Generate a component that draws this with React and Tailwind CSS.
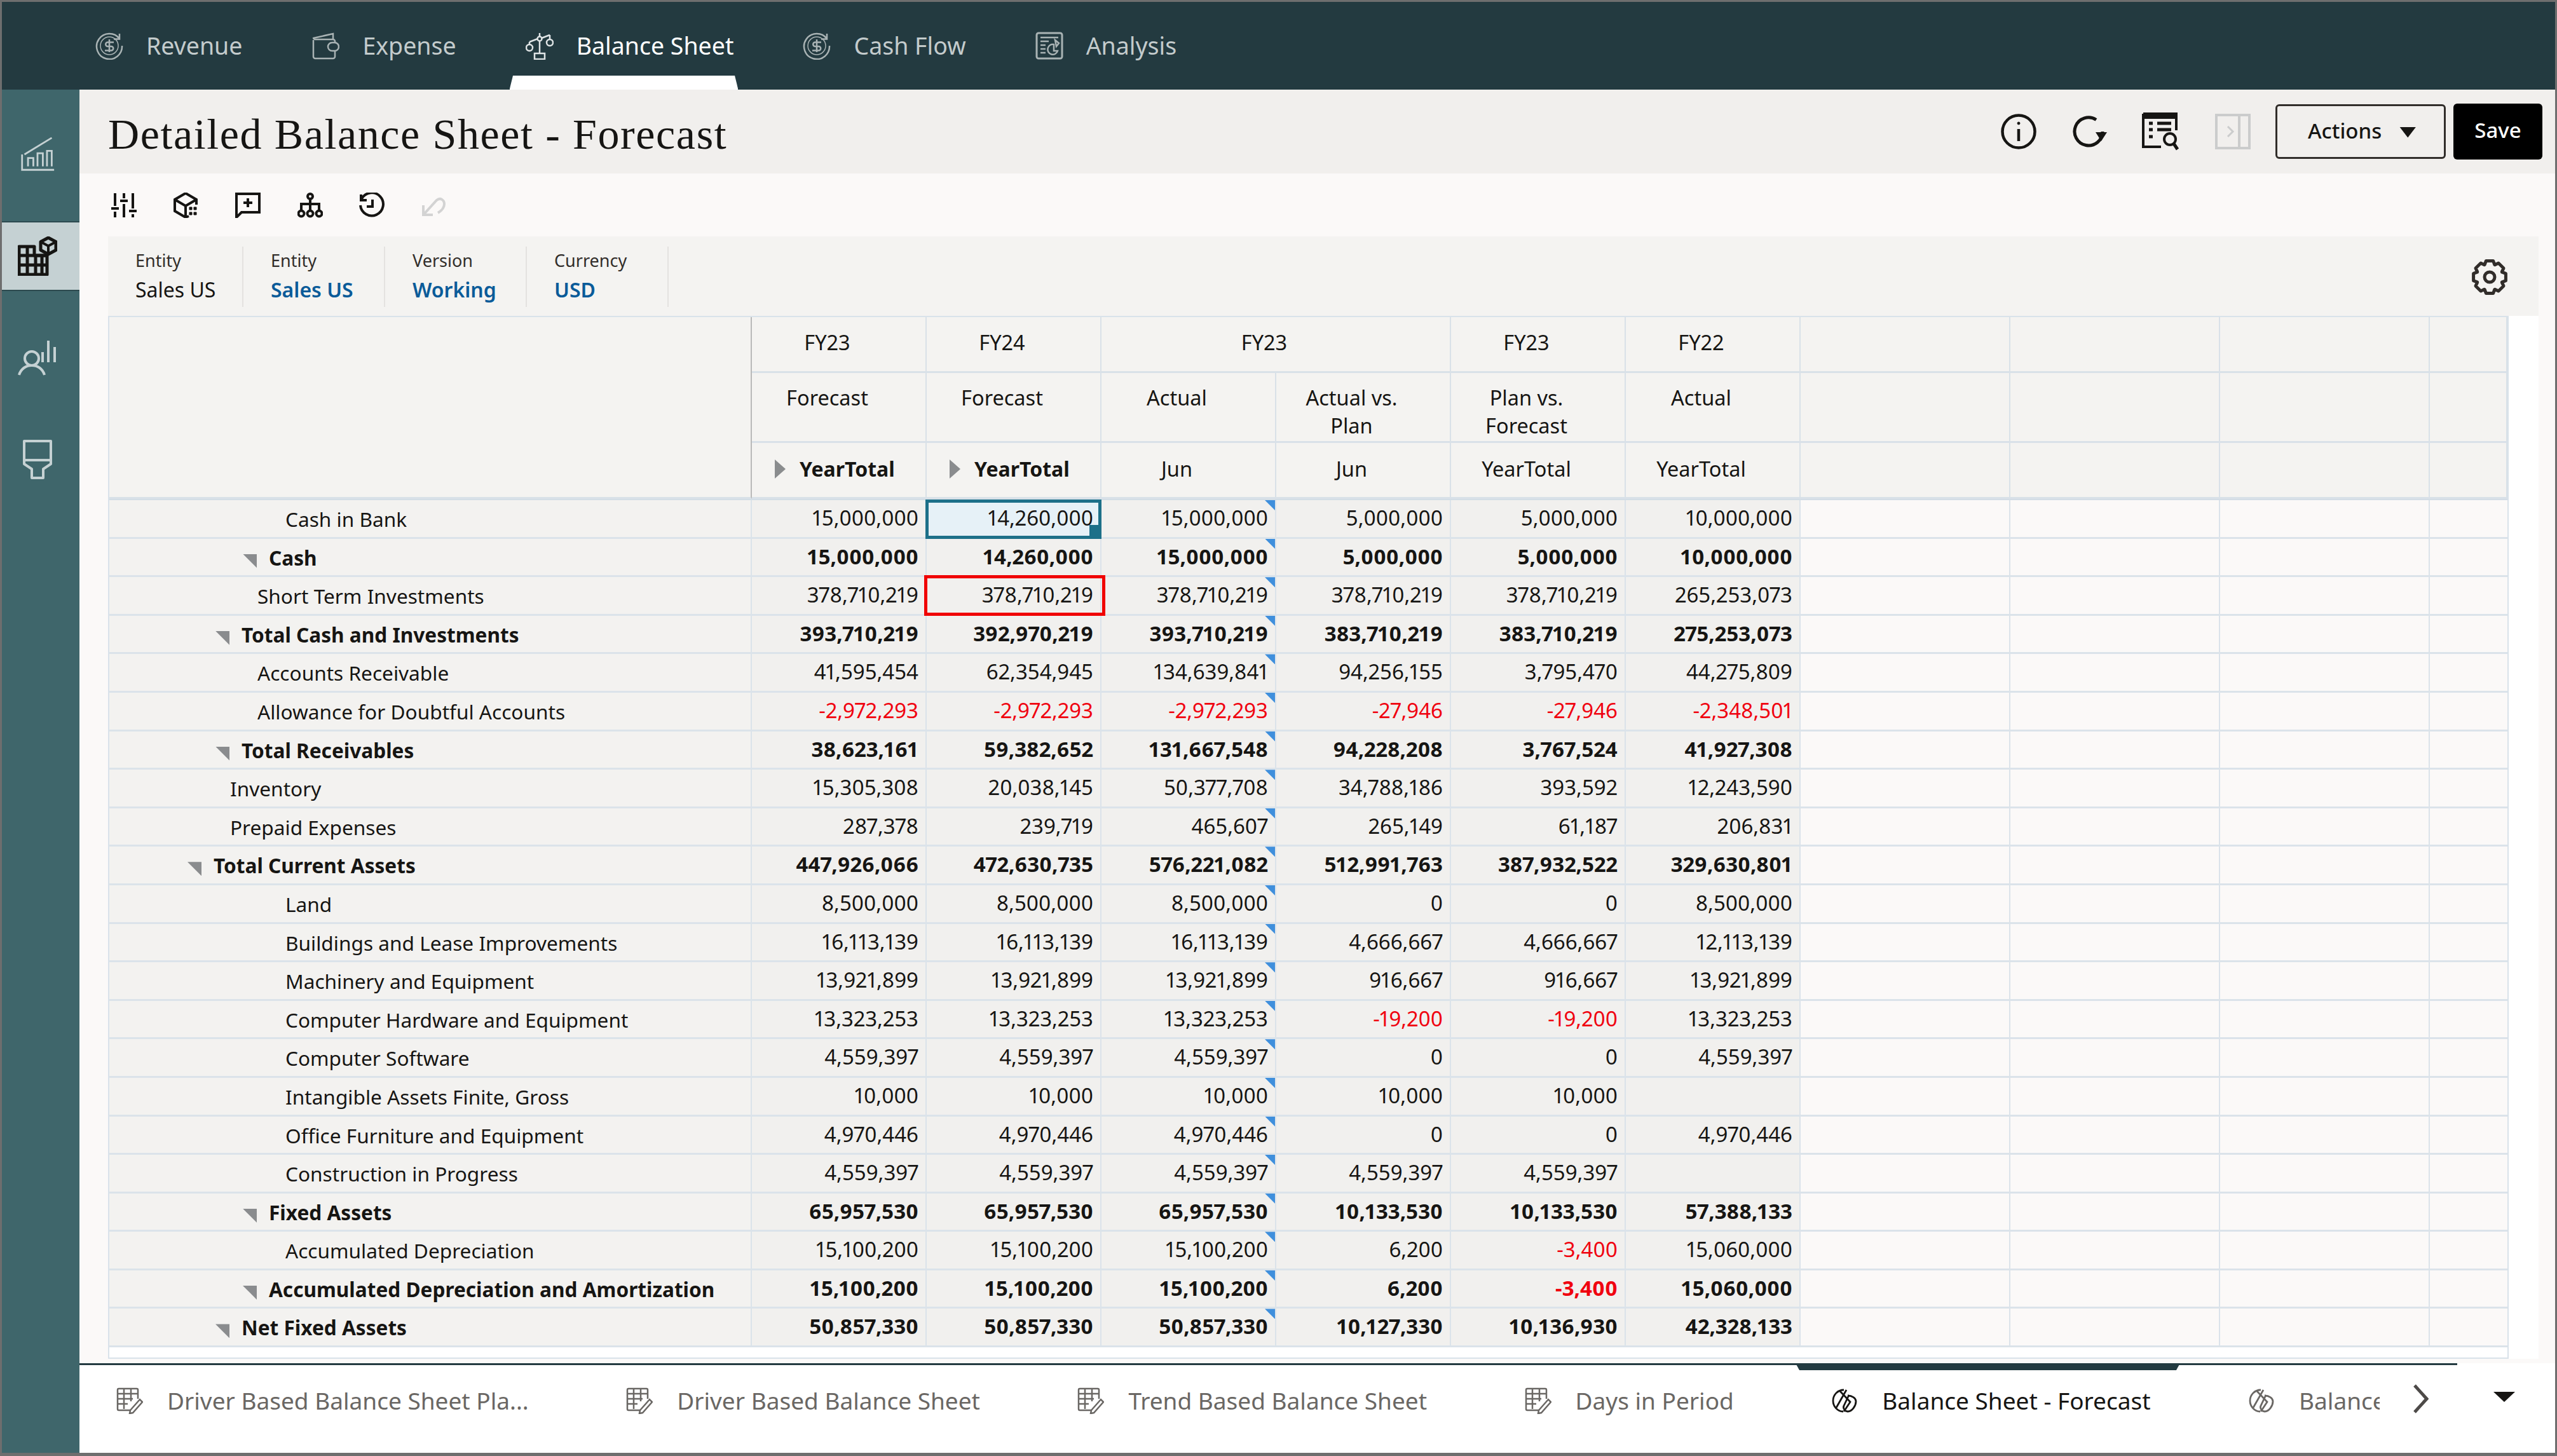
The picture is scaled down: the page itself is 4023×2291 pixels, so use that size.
import React from 'react'

const gridCols = 'grid grid-cols-[1011px_repeat(6,275px)_repeat(3,330px)_122px]'

const rows = [
    { label: 'Cash in Bank', pad: 'pl-[277px]', vals: ['15,000,000', '14,260,000', '15,000,000', '5,000,000', '5,000,000', '10,000,000'] },
    { label: 'Cash', pad: 'pl-[251px]', bold: true, tri: 'ml-[210px]', vals: ['15,000,000', '14,260,000', '15,000,000', '5,000,000', '5,000,000', '10,000,000'] },
    { label: 'Short Term Investments', pad: 'pl-[233px]', vals: ['378,710,219', '378,710,219', '378,710,219', '378,710,219', '378,710,219', '265,253,073'] },
    { label: 'Total Cash and Investments', pad: 'pl-[208px]', bold: true, tri: 'ml-[167px]', vals: ['393,710,219', '392,970,219', '393,710,219', '383,710,219', '383,710,219', '275,253,073'] },
    { label: 'Accounts Receivable', pad: 'pl-[233px]', vals: ['41,595,454', '62,354,945', '134,639,841', '94,256,155', '3,795,470', '44,275,809'] },
    { label: 'Allowance for Doubtful Accounts', pad: 'pl-[233px]', vals: ['-2,972,293', '-2,972,293', '-2,972,293', '-27,946', '-27,946', '-2,348,501'] },
    { label: 'Total Receivables', pad: 'pl-[208px]', bold: true, tri: 'ml-[167px]', vals: ['38,623,161', '59,382,652', '131,667,548', '94,228,208', '3,767,524', '41,927,308'] },
    { label: 'Inventory', pad: 'pl-[190px]', vals: ['15,305,308', '20,038,145', '50,377,708', '34,788,186', '393,592', '12,243,590'] },
    { label: 'Prepaid Expenses', pad: 'pl-[190px]', vals: ['287,378', '239,719', '465,607', '265,149', '61,187', '206,831'] },
    { label: 'Total Current Assets', pad: 'pl-[164px]', bold: true, tri: 'ml-[123px]', vals: ['447,926,066', '472,630,735', '576,221,082', '512,991,763', '387,932,522', '329,630,801'] },
    { label: 'Land', pad: 'pl-[277px]', vals: ['8,500,000', '8,500,000', '8,500,000', '0', '0', '8,500,000'] },
    { label: 'Buildings and Lease Improvements', pad: 'pl-[277px]', vals: ['16,113,139', '16,113,139', '16,113,139', '4,666,667', '4,666,667', '12,113,139'] },
    { label: 'Machinery and Equipment', pad: 'pl-[277px]', vals: ['13,921,899', '13,921,899', '13,921,899', '916,667', '916,667', '13,921,899'] },
    { label: 'Computer Hardware and Equipment', pad: 'pl-[277px]', vals: ['13,323,253', '13,323,253', '13,323,253', '-19,200', '-19,200', '13,323,253'] },
    { label: 'Computer Software', pad: 'pl-[277px]', vals: ['4,559,397', '4,559,397', '4,559,397', '0', '0', '4,559,397'] },
    { label: 'Intangible Assets Finite, Gross', pad: 'pl-[277px]', vals: ['10,000', '10,000', '10,000', '10,000', '10,000', ''] },
    { label: 'Office Furniture and Equipment', pad: 'pl-[277px]', vals: ['4,970,446', '4,970,446', '4,970,446', '0', '0', '4,970,446'] },
    { label: 'Construction in Progress', pad: 'pl-[277px]', vals: ['4,559,397', '4,559,397', '4,559,397', '4,559,397', '4,559,397', ''] },
    { label: 'Fixed Assets', pad: 'pl-[251px]', bold: true, tri: 'ml-[210px]', vals: ['65,957,530', '65,957,530', '65,957,530', '10,133,530', '10,133,530', '57,388,133'] },
    { label: 'Accumulated Depreciation', pad: 'pl-[277px]', vals: ['15,100,200', '15,100,200', '15,100,200', '6,200', '-3,400', '15,060,000'] },
    { label: 'Accumulated Depreciation and Amortization', pad: 'pl-[251px]', bold: true, tri: 'ml-[210px]', vals: ['15,100,200', '15,100,200', '15,100,200', '6,200', '-3,400', '15,060,000'] },
    { label: 'Net Fixed Assets', pad: 'pl-[208px]', bold: true, tri: 'ml-[167px]', vals: ['50,857,330', '50,857,330', '50,857,330', '10,127,330', '10,136,930', '42,328,133'] },
]

const Svg = ({ size = 44, vb = 44, sw = 2.5, className = '', children }) => (
    <svg width={size} height={size} viewBox={`0 0 ${vb} ${vb}`} fill="none" stroke="currentColor" strokeWidth={sw} className={className}>
        {children}
    </svg>
)

const DollarCycle = () => (
    <Svg>
        <path d="M38 11A20 20 0 1 0 42 22" />
        <path d="M38 3v8.500h-9" />
        <path d="M29 16.500H19.500a3.200 3.200 0 0 0 0 6.500h5.500a3.200 3.200 0 0 1 0 6.500H15" />
        <path d="M22 12v20" />
        <circle cx="22" cy="22" r="14" strokeWidth="1.500" />
    </Svg>
)

const Wallet = () => (
    <Svg>
        <path d="M3 13v26a3 3 0 0 0 3 3h28a3 3 0 0 0 3-3v-9" />
        <path d="M37 18v-3a3 3 0 0 0-3-3H6a3 3 0 0 1-3-3" />
        <path d="M3 10 34 3v9" />
        <rect x="26" y="17" width="17" height="13" rx="6.500" />
    </Svg>
)

const Scale = () => (
    <Svg>
        <circle cx="22" cy="11" r="3.500" />
        <path d="M22 2v5M22 15v20M6 16l13-5M25 10l13-5" />
        <circle cx="6" cy="25" r="5" />
        <circle cx="38" cy="17" r="5" />
        <path d="M6 16v4M38 5v7" />
        <rect x="14" y="34" width="16" height="9" />
    </Svg>
)

const AnalysisIcon = () => (
    <Svg>
        <rect x="2" y="2" width="40" height="40" rx="3" strokeWidth="3" />
        <path d="M8 9h28M8 15h13M8 21h8M8 27h8M8 33h8" />
        <path d="M29 20a8 8 0 1 0 6 10h-6z" />
        <path d="M31 13l6 5-4 5z" />
    </Svg>
)

const topTabs = [
    { name: 'Revenue', Icon: DollarCycle },
    { name: 'Expense', Icon: Wallet },
    { name: 'Balance Sheet', Icon: Scale, active: true },
    { name: 'Cash Flow', Icon: DollarCycle },
    { name: 'Analysis', Icon: AnalysisIcon },
]

const TableEdit = () => (
    <svg width="42" height="42" viewBox="0 0 42 42" fill="none" stroke="currentColor" strokeWidth="2.500">
        <path d="M22 36H4a2 2 0 0 1-2-2V4a2 2 0 0 1 2-2h28a2 2 0 0 1 2 2v14" />
        <path d="M2 10h32M2 18h24M2 26h16M12 2v32M23 2v20" />
        <path d="M22 36l-1 5 5-1 15-17-4-4z" fill="#fff" />
    </svg>
)

const Lattice = () => (
    <svg width="42" height="42" viewBox="0 0 42 42" fill="none" stroke="currentColor" strokeWidth="2.800">
        <path d="M20 4C10 4 3 12 3 21c0 9 7 17 16 17" />
        <path d="M24 4 8 32M14 6l16 17-10 15" />
        <path d="M26 13c7 0 13 4 13 9 0 7-6 16-13 16-4 0-8-5-6-9l8-17" />
    </svg>
)

const bottomTabs = [
    { name: 'Driver Based Balance Sheet Pla...', Icon: TableEdit },
    { name: 'Driver Based Balance Sheet', Icon: TableEdit },
    { name: 'Trend Based Balance Sheet', Icon: TableEdit },
    { name: 'Days in Period', Icon: TableEdit },
    { name: 'Balance Sheet - Forecast', Icon: Lattice, active: true },
]

const SideChart = () => (
    <Svg size={56} vb={60} sw={3}>
        <path d="M4 30v26h54" />
        <path d="M8 30 54 2" />
        <path d="M14 50V36h9v14M30 50V28h9v22M46 50V24h8v26" />
    </Svg>
)

const SideGrid = () => (
    <svg width="62" height="62" viewBox="0 0 62 62" fill="none" stroke="#161513" strokeWidth="5">
        <path d="M2 16h24v14h20v30H2z" strokeLinejoin="round" />
        <path d="M15 16v44M28 30v30M2 30h44M2 45h44M38 30v30" />
        <path d="M48 2l12 6.500v13L48 28l-12-6.500v-13z" fill="#c5d1d3" strokeLinejoin="round" />
        <path d="M36 8.500l12 6.500 12-6.500M48 15v13" strokeWidth="4" />
    </svg>
)

const SidePerson = () => (
    <svg width="62" height="58" viewBox="0 0 62 58" fill="none" stroke="currentColor" strokeWidth="4">
        <circle cx="22" cy="30" r="11" />
        <path d="M2 56c3-10 11-15 20-15s17 5 20 15" />
        <path d="M39 36V20M48 36V2M58 36V12" />
    </svg>
)

const SidePin = () => (
    <svg width="46" height="62" viewBox="0 0 46 62" fill="none" stroke="currentColor" strokeWidth="4">
        <path d="M2 2h42v36L32 46v14H14V46L2 38z" strokeLinejoin="round" />
        <path d="M2 32h42" />
    </svg>
)

const ToolSliders = () => (
    <Svg size={40} vb={40} sw={4}>
        <path d="M6 1v20M6 30v9M20 1v8M20 18v21M34 1v24M34 34v5" />
        <path d="M0 25h12M14 13h12M28 29h12" />
    </Svg>
)

const ToolCube = () => (
    <Svg size={40} vb={40} sw={4}>
        <path d="M24 37l-5 2L2 29V11L19 1l17 10v8" />
        <path d="M2 11l17 10 17-10M19 21v18" />
        <path d="M25 23h4v4h-4zM32 23h4v4h-4zM25 31h4v4h-4zM32 31h4v4h-4z" fill="currentColor" strokeWidth="1" />
    </Svg>
)

const ToolComment = () => (
    <Svg size={40} vb={40} sw={4}>
        <path d="M2 39V2h36v29H10z" />
        <path d="M13 16h14M20 9v14" />
    </Svg>
)

const ToolTree = () => (
    <Svg size={40} vb={40} sw={4}>
        <circle cx="20" cy="6" r="4" />
        <circle cx="6" cy="33" r="4.500" />
        <circle cx="20" cy="33" r="4.500" />
        <circle cx="34" cy="33" r="4.500" />
        <path d="M20 10v19M6 28V18h28v10" />
    </Svg>
)

const ToolHistory = () => (
    <Svg size={40} vb={40} sw={4}>
        <path d="M4 10A18 18 0 1 1 2 20" />
        <path d="M3 3v9h9" />
        <path d="M21 11v11h-9" />
    </Svg>
)

const ToolUndo = () => (
    <Svg size={40} vb={40} sw={4}>
        <path d="M4 34 24 12c6-5 12 0 12 6 0 6-5 11-10 14" />
        <path d="M3 20v15h15" />
    </Svg>
)

const InfoIcon = () => (
    <Svg size={56} vb={56} sw={4.5}>
        <circle cx="28" cy="28" r="25.500" />
        <path d="M28 24v19" />
        <circle cx="28" cy="15" r="2" fill="currentColor" strokeWidth="1" />
    </Svg>
)

const RefreshIcon = () => (
    <Svg size={56} vb={56} sw={5}>
        <path d="M49 28A22 22 0 1 1 39 9.500" />
        <path d="M38 29h18L47 43z" fill="currentColor" stroke="none" />
    </Svg>
)

const ReportIcon = () => (
    <Svg size={60} vb={60} sw={4}>
        <path d="M2 2h52v26M2 2v52h28" />
        <path d="M2 7h52" strokeWidth="6" />
        <path d="M11 17h6M24 17h22M11 27h6M24 27h22M11 38h6" strokeWidth="5" />
        <circle cx="44" cy="42" r="9" />
        <path d="M50 49l6 9" strokeWidth="5" />
    </Svg>
)

const PanelIcon = () => (
    <svg width="56" height="56" viewBox="0 0 56 56" fill="#f1efed" stroke="#cbcccc" strokeWidth="4">
        <path d="M2 2h52v52H2zM38 2v52" />
        <path d="M20 20l8 8-8 8" strokeWidth="3" />
    </svg>
)

const gearPath = (() => {
    const pts = []
    for (let i = 0; i < 8; i++) {
        const a = (i * Math.PI) / 4
        const offsets = [[-0.38, 21], [-0.22, 26], [0.22, 26], [0.38, 21]]
        offsets.forEach(([d, r]) => pts.push(`${(28 + r * Math.sin(a + d)).toFixed(1)} ${(28 - r * Math.cos(a + d)).toFixed(1)}`))
    }
    return `M${pts.join('L')}z`
})()

const Gear = () => (
    <Svg size={56} vb={56} sw={5} className="text-[#312d2a]">
        <path d={gearPath} strokeLinejoin="round" />
        <circle cx="28" cy="28" r="8" />
    </Svg>
)

const Filter = ({ label, value, link, first }) => (
    <div className={`${first ? 'w-[213px] pl-[43px]' : 'w-[223px] pl-[43px]'} h-[95px] border-r-2 border-[#e4e2e0] flex flex-col`}>
        <span className="text-[27px] leading-[40px] mt-[2px] text-[#312d2a]">{label}</span>
        <span className={`text-[32px] leading-[44px] mt-[4px] ${link ? 'text-[#0a5b99] font-semibold' : 'text-[#161513]'}`}>{value}</span>
    </div>
)

const headCell = 'border-r-2 border-b-[3px] border-[#d9e1e8] bg-[#f4f3f1] text-[32.5px] text-[#161513]'
const headCenter = `${headCell} flex items-center justify-center pr-[36px]`

const Tri = ({ className = '' }) => <span className={`w-[17px] h-[30px] bg-[#8a8c8e] [clip-path:polygon(0_0,100%_50%,0_100%)] ${className}`} />

const GridHeader = () => (
    <div className={`${gridCols} grid-rows-[88px_110px_88px] border-b-[2px] border-[#d3dde5]`}>
        <div className={`row-span-3 ${headCell} !border-r-[#b9b9b9]`} />
        <div className={`${headCenter} pb-[4px]`}>FY23</div>
        <div className={`${headCenter} pb-[4px]`}>FY24</div>
        <div className={`col-span-2 ${headCenter} pb-[4px]`}>FY23</div>
        <div className={`${headCenter} pb-[4px]`}>FY23</div>
        <div className={`${headCenter} pb-[4px]`}>FY22</div>
        <div className={headCell} />
        <div className={headCell} />
        <div className={headCell} />
        <div className={headCell} />

        {[['Forecast'], ['Forecast'], ['Actual'], ['Actual vs.', 'Plan'], ['Plan vs.', 'Forecast'], ['Actual']].map((lines, i) => (
            <div key={i} className={`${headCell} pt-[17px] pr-[36px] text-center leading-[44px]`}>
                {lines.map((line) => <div key={line}>{line}</div>)}
            </div>
        ))}
        <div className={headCell} />
        <div className={headCell} />
        <div className={headCell} />
        <div className={headCell} />

        <div className={`${headCell} flex items-center pl-[36px] pb-[3px] gap-[22px] font-bold !text-[32px]`}><Tri />YearTotal</div>
        <div className={`${headCell} flex items-center pl-[36px] pb-[3px] gap-[22px] font-bold !text-[32px]`}><Tri />YearTotal</div>
        <div className={`${headCenter} pb-[3px]`}>Jun</div>
        <div className={`${headCenter} pb-[3px]`}>Jun</div>
        <div className={`${headCenter} pb-[3px]`}>YearTotal</div>
        <div className={`${headCenter} pb-[3px]`}>YearTotal</div>
        <div className={headCell} />
        <div className={headCell} />
        <div className={headCell} />
        <div className={headCell} />
    </div>
)

const DataCell = ({ value, bold, col, rowIndex }) => {
    const selected = rowIndex === 0 && col === 1
    const flagged = rowIndex === 2 && col === 1
    return (
        <div className={`relative flex items-start justify-end pt-[6px] pr-[11px] border-r-2 border-b-[3px] border-[#dbe3ea] text-[33px] proportional-nums leading-[44px] ${selected ? 'bg-[#e6f1f7]' : 'bg-[#f1f0ee]'} ${value.startsWith('-') ? 'text-[#f0000f]' : 'text-[#161513]'} ${bold ? 'font-bold' : ''}`}>
            {value}
            {col === 2 && <span className="absolute top-0 right-0 w-[16px] h-[16px] bg-[#3f8fdc] [clip-path:polygon(0_0,100%_0,100%_100%)]" />}
            {selected && (
                <span className="absolute z-10 -left-[2px] -top-[1px] -right-[2px] -bottom-[3px] border-[5px] border-[#1d7089]">
                    <span className="absolute right-0 bottom-0 w-[14px] h-[17px] bg-[#1d7089]" />
                </span>
            )}
            {flagged && <span className="absolute z-10 -left-[4px] -top-[3px] -right-[8px] -bottom-[3px] border-[5px] border-[#f00000]" />}
        </div>
    )
}

const GridRow = ({ row, rowIndex }) => (
    <div className={`${gridCols} h-[60.6px]`}>
        <div className={`relative flex items-start pt-[8px] border-r-2 border-b-[3px] border-[#dbe3ea] bg-[#f3f2f0] text-[31.6px] leading-[44px] text-[#161513] ${row.bold ? 'font-bold' : ''}`}>
            {row.tri && <span className={`absolute top-[24px] w-[22px] h-[22px] bg-[#8a8c8e] [clip-path:polygon(100%_0,100%_100%,0_0)] ${row.tri}`} />}
            <span className={row.pad}>{row.label}</span>
        </div>
        {row.vals.map((v, i) => (
            <DataCell key={i} value={v} bold={row.bold} col={i} rowIndex={rowIndex} />
        ))}
        <div className="border-r-2 border-b-[3px] border-[#dbe3ea] bg-[#fbf9f8]" />
        <div className="border-r-2 border-b-[3px] border-[#dbe3ea] bg-[#fbf9f8]" />
        <div className="border-r-2 border-b-[3px] border-[#dbe3ea] bg-[#fbf9f8]" />
        <div className="border-b-[3px] border-[#dbe3ea] bg-[#fbf9f8]" />
    </div>
)

const App = () => {
    return (
        <div className="w-[4023px] h-[2291px] overflow-hidden flex flex-col bg-white border-t-[3px] border-x-[3px] border-b-[5px] border-[#6e6e6e] font-['Noto_Sans',sans-serif]">
            <div className="h-[138px] shrink-0 bg-[#233a40] flex items-start pl-[147px] gap-[109px] pt-[41px]">
                {topTabs.map(({ name, Icon, active }) => (
                    <div key={name} className={`relative flex items-center gap-[36px] text-[37.5px] leading-[56px] ${active ? 'text-white' : 'text-[#c3cbcc]'}`}>
                        <span className={active ? 'text-[#dfe4e5]' : 'text-[#a9b3b4]'}><Icon /></span>
                        {name}
                        {active && <span className="absolute -left-[25px] -right-[7px] top-[75px] h-[22px] bg-white [clip-path:polygon(1.500%_0,98.500%_0,100%_100%,0_100%)]" />}
                    </div>
                ))}
            </div>

            <div className="flex-1 flex min-h-0">
                <div className="w-[122px] shrink-0 bg-[#3f666b] flex flex-col gap-[50px] pt-[47px] text-[#c5d1d3]">
                    <div className="h-[110px] flex items-center justify-center pr-[10px]"><SideChart /></div>
                    <div className="h-[110px] flex items-center justify-center pr-[10px] bg-[#c5d1d3] border-y-2 border-[#2c4a4f]"><SideGrid /></div>
                    <div className="h-[110px] flex items-center justify-center pr-[10px]"><SidePerson /></div>
                    <div className="h-[110px] flex items-center justify-center pr-[10px]"><SidePin /></div>
                </div>

                <div className="flex-1 min-w-0 flex flex-col bg-[#fbf9f8]">
                    <div className="h-[132px] shrink-0 bg-[#f1efed] flex items-center pl-[45px] pr-[20px]">
                        <h1 className="flex-1 pt-[8px] font-['Liberation_Serif',serif] text-[68px] tracking-[1.6px] text-[#161513]">Detailed Balance Sheet - Forecast</h1>
                        <div className="flex items-center gap-[55px] text-[#161513]">
                            <InfoIcon />
                            <RefreshIcon />
                            <ReportIcon />
                            <PanelIcon />
                        </div>
                        <button className="ml-[39px] w-[268px] h-[86px] flex items-center pl-[48px] pb-[2px] gap-[28px] border-[3px] border-[#312d2a] rounded-[6px] text-[33px] font-medium text-[#161513]">
                            Actions
                            <span className="mt-[4px] w-[26px] h-[17px] bg-[#161513] [clip-path:polygon(0_0,100%_0,50%_100%)]" />
                        </button>
                        <button className="ml-[12px] w-[140px] h-[88px] pb-[4px] rounded-[6px] bg-black text-white text-[33px] font-medium">Save</button>
                    </div>

                    <div className="h-[99px] shrink-0 flex items-center pl-[50px] gap-[57.5px] text-[#161513]">
                        <ToolSliders />
                        <ToolCube />
                        <ToolComment />
                        <ToolTree />
                        <ToolHistory />
                        <span className="text-[#d3d3d3]"><ToolUndo /></span>
                    </div>

                    <div className="ml-[45px] w-[3824px] flex-1 flex flex-col bg-white">
                        <div className="h-[125px] shrink-0 bg-[#f4f3f1] flex items-start pt-[16px]">
                            <Filter first label="Entity" value="Sales US" />
                            <Filter link label="Entity" value="Sales US" />
                            <Filter link label="Version" value="Working" />
                            <Filter link label="Currency" value="USD" />
                            <div className="ml-auto mr-[49px] mt-[20px]"><Gear /></div>
                        </div>

                        <div className="w-[3777px] h-[1641px] shrink-0 border-2 border-[#d9e2ea] bg-white">
                            <GridHeader />
                            {rows.map((row, i) => (
                                <GridRow key={row.label} row={row} rowIndex={i} />
                            ))}
                        </div>
                    </div>

                    <div className="h-[141px] shrink-0 bg-white mt-[7px]">
                        <div className="w-[3741px] h-[3px] bg-[#233a40] relative">
                            <span className="absolute left-[2700px] top-0 w-[605px] h-[11px] bg-[#233a40] [clip-path:polygon(0_0,100%_0,99%_100%,1%_100%)]" />
                        </div>
                        <div className="relative flex items-center pl-[58px] pt-[30px] gap-[153.5px] text-[37px] leading-[52px] whitespace-nowrap">
                            {bottomTabs.map(({ name, Icon, active }) => (
                                <div key={name} className={`flex items-center gap-[38px] ${active ? 'text-[#161513]' : 'text-[#6a6764]'}`}>
                                    <Icon />
                                    {name}
                                </div>
                            ))}
                            <div className="flex items-center gap-[38px] text-[#6a6764]">
                                <Lattice />
                                <span className="w-[127px] overflow-hidden">Balance Sheet</span>
                            </div>
                            <svg width="24" height="46" viewBox="0 0 24 46" fill="none" stroke="#4d4a48" strokeWidth="5" className="absolute left-[3672px] top-[30px]">
                                <path d="M2 2l19 21L2 44" />
                            </svg>
                            <span className="absolute left-[3798px] top-[42px] w-[34px] h-[16px] bg-[#161513] [clip-path:polygon(0_0,100%_0,50%_100%)]" />
                        </div>
                    </div>
                </div>
            </div>
        </div>
    )
}

export default App
